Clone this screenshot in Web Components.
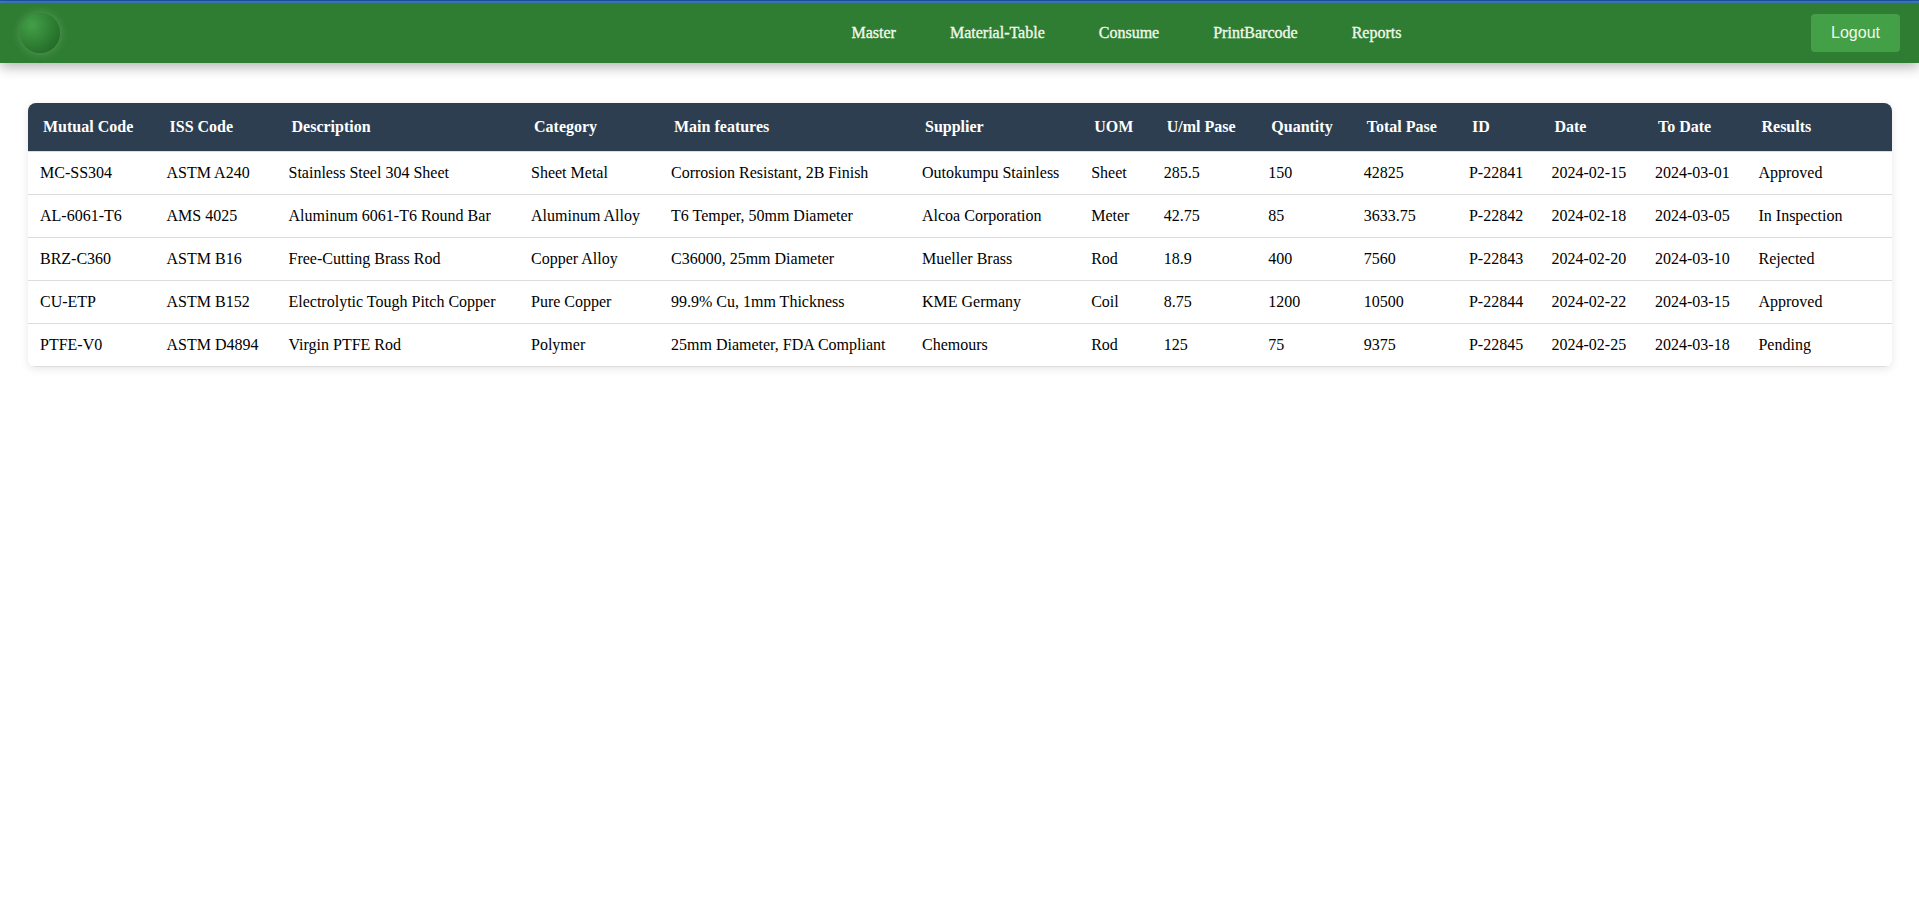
<!DOCTYPE html>
<html lang="en">
<head>
<meta charset="utf-8">
<title>Material Table</title>
<style>
body{margin:0;background:#fff;color:#000;font-family:"Liberation Serif","Times New Roman",serif;font-size:16px}
</style>
</head>
<body>
<app-shell></app-shell>
<script>
const define=(name,html,setup)=>customElements.define(name,class extends HTMLElement{
  constructor(){super();this.attachShadow({mode:'open'}).innerHTML=html;}
  connectedCallback(){if(setup)setup(this,this.shadowRoot);}
});

define('brand-orb',`<style>
:host{display:block;width:40px;height:40px;border-radius:50%;background:radial-gradient(circle at 30% 30%,#43a047,#1b5e20);box-shadow:0 0 10px rgba(200,230,201,.3)}
</style>`);

define('nav-link',`<style>
:host{display:block;color:#f1f8e9;font-weight:500;line-height:18px;white-space:nowrap;-webkit-text-stroke:.35px #f1f8e9}
</style><slot></slot>`);

define('logout-button',`<style>
:host{display:block}
button{display:block;width:89px;height:38px;padding:0;border:0;border-radius:4px;background:#43a047;color:#f1f8e9;font:16px "Liberation Sans",Arial,sans-serif}
</style><button><slot></slot></button>`);

define('nav-bar',`<style>
:host{display:flex;align-items:center;box-sizing:border-box;height:60px;padding:0 19px 0 20px;background:#2e7d32;box-shadow:0 4px 12px rgba(0,0,0,.3)}
nav{display:flex;gap:54px;margin:0 auto 0 791.5px}
</style>
<brand-orb></brand-orb>
<nav><nav-link>Master</nav-link><nav-link>Material-Table</nav-link><nav-link>Consume</nav-link><nav-link>PrintBarcode</nav-link><nav-link>Reports</nav-link></nav>
<logout-button>Logout</logout-button>`);

define('data-row',`<style>
:host{display:grid;grid-template-columns:126.5px 122px 242.5px 140px 251px 169.2px 72.5px 104.6px 95.5px 105.2px 82.5px 103.5px 103.5px 1fr;box-sizing:border-box;height:43px;border-bottom:1px solid #ddd;background:#fff;align-items:center}
:host([head]){height:49px;background:#2c3e50;color:#fff;font-weight:bold}
span{padding-left:12px;line-height:18px;white-space:nowrap}
:host([head]) span{padding-left:15px}
</style>`,(el,root)=>{
  for(const text of el.getAttribute('cells').split('|')){
    const cell=document.createElement('span');
    cell.textContent=text;
    root.append(cell);
  }
});

define('material-table',`<style>
:host{display:block;border-radius:8px;overflow:hidden;box-shadow:0 2px 8px rgba(0,0,0,.1)}
</style>
<data-row head cells="Mutual Code|ISS Code|Description|Category|Main features|Supplier|UOM|U/ml Pase|Quantity|Total Pase|ID|Date|To Date|Results"></data-row>
<data-row cells="MC-SS304|ASTM A240|Stainless Steel 304 Sheet|Sheet Metal|Corrosion Resistant, 2B Finish|Outokumpu Stainless|Sheet|285.5|150|42825|P-22841|2024-02-15|2024-03-01|Approved"></data-row>
<data-row cells="AL-6061-T6|AMS 4025|Aluminum 6061-T6 Round Bar|Aluminum Alloy|T6 Temper, 50mm Diameter|Alcoa Corporation|Meter|42.75|85|3633.75|P-22842|2024-02-18|2024-03-05|In Inspection"></data-row>
<data-row cells="BRZ-C360|ASTM B16|Free-Cutting Brass Rod|Copper Alloy|C36000, 25mm Diameter|Mueller Brass|Rod|18.9|400|7560|P-22843|2024-02-20|2024-03-10|Rejected"></data-row>
<data-row cells="CU-ETP|ASTM B152|Electrolytic Tough Pitch Copper|Pure Copper|99.9% Cu, 1mm Thickness|KME Germany|Coil|8.75|1200|10500|P-22844|2024-02-22|2024-03-15|Approved"></data-row>
<data-row cells="PTFE-V0|ASTM D4894|Virgin PTFE Rod|Polymer|25mm Diameter, FDA Compliant|Chemours|Rod|125|75|9375|P-22845|2024-02-25|2024-03-18|Pending"></data-row>`);

define('app-shell',`<style>
:host{display:block}
.accent{height:2px;border-top:1px solid #1a539f;background:#4279bd}
main{padding:40px 27px 24px 28px}
</style>
<div class="accent"></div><nav-bar></nav-bar><main><material-table></material-table></main>`);
</script>
</body>
</html>
